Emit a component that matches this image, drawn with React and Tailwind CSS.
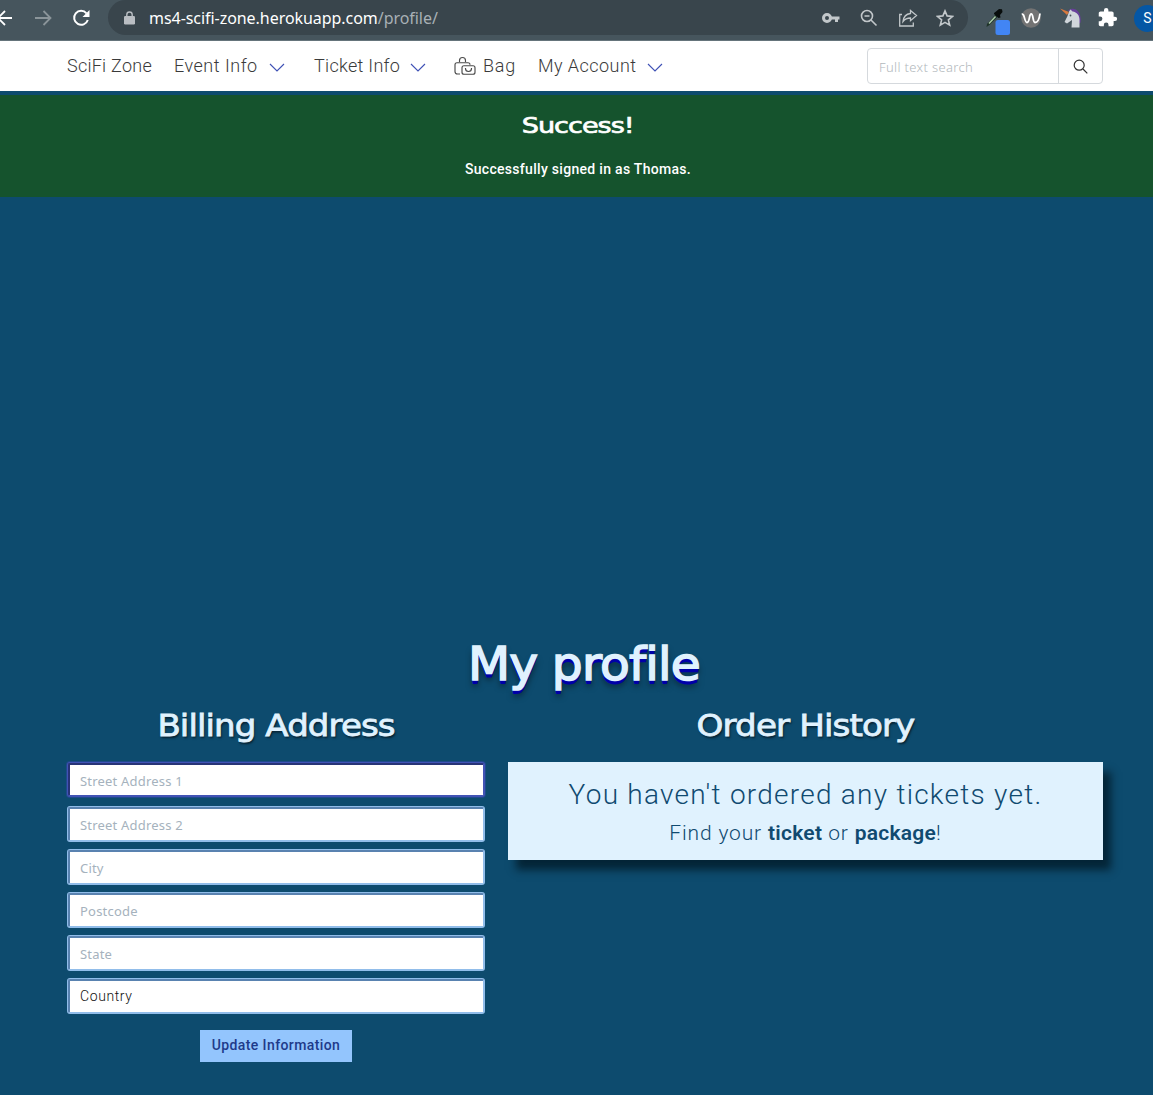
import React from "react";

const Caret = () => (
  <svg className="mt-[4px] h-[10px] w-[16px] shrink-0" viewBox="0 0 16 10" fill="none" stroke="#3f51b5" strokeWidth="1.15">
    <path d="M1 1l7 7 7-7" />
  </svg>
);

function BrowserBar() {
  return (
    <div className="flex h-[41px] items-start overflow-hidden border-b border-[#65747b] bg-[#46555d]">
      <svg className="mt-[9px] h-[18px] w-[12px] shrink-0" viewBox="0 0 12 18" fill="none" stroke="#fff" strokeWidth="1.8">
        <path d="M12 9H-2M5 2l-7 7 7 7" />
      </svg>
      <svg className="mt-[9px] ml-[22px] h-[18px] w-[18px] shrink-0" viewBox="0 0 18 18" fill="none" stroke="#8b959a" strokeWidth="1.8">
        <path d="M1 9h15M9.500 2l7 7-7 7" />
      </svg>
      <svg className="mt-[9px] ml-[20px] h-[18px] w-[18px] shrink-0" viewBox="0 0 18 18">
        <path d="M14.500 4.300A7 7 0 1 0 15.800 11" fill="none" stroke="#fff" strokeWidth="2" />
        <path d="M17.500 1v7h-7z" fill="#fff" />
      </svg>
      <div className="ml-[18px] flex h-[35px] w-[860px] shrink-0 items-center rounded-[18px] bg-[#39454c]">
        <svg className="ml-[16px] h-[14px] w-[11px] shrink-0" viewBox="0 0 11 14">
          <rect y="5" width="11" height="8.500" rx="1.200" fill="#b9bdc2" />
          <path d="M2.800 6V3.700a2.700 2.700 0 0 1 5.400 0V6" fill="none" stroke="#b9bdc2" strokeWidth="1.400" />
        </svg>
        <div className="ml-[14px] w-[660px] whitespace-nowrap font-['Noto_Sans',sans-serif] text-[16px] tracking-[-0.05px] text-white">
          ms4-scifi-zone.herokuapp.com<span className="text-[#a8b0b5]">/profile/</span>
        </div>
        <svg className="ml-[13px] h-[12px] w-[18px] shrink-0" viewBox="0 0 18 12" fill="none" stroke="#c2c7ca">
          <circle cx="5" cy="6" r="3.500" strokeWidth="3" />
          <path d="M8 6h9.500M14.500 6v4" strokeWidth="3" />
        </svg>
        <svg className="ml-[20px] h-[18px] w-[18px] shrink-0" viewBox="0 0 18 18" fill="none" stroke="#c2c7ca" strokeWidth="1.600">
          <circle cx="7" cy="7" r="5.500" />
          <path d="M11 11l5.500 5.500M4.500 7h5" />
        </svg>
        <svg className="ml-[20px] h-[18px] w-[20px] shrink-0" viewBox="0 0 20 18" fill="none" stroke="#c2c7ca" strokeWidth="1.300">
          <path d="M4 5.500H1.700v11.500h13.600v-3.500" />
          <path d="M12.500 1.500l6 5-6 5.200V9c-3.500 0-5.600 1-7.500 3.500C5.500 8 8 5 12.500 4.500z" />
        </svg>
        <svg className="ml-[18px] h-[18px] w-[18px] shrink-0" viewBox="0 0 18 18" fill="none" stroke="#c2c7ca" strokeWidth="1.600">
          <path d="M9 1.900l2.100 5 5.400.5-4.100 3.500 1.300 5.300L9 13.400l-4.700 2.800 1.300-5.300-4.100-3.500 5.400-.5z" />
        </svg>
      </div>
      <svg className="mt-[8px] ml-[18px] h-[28px] w-[24px] shrink-0" viewBox="0 0 24 28">
        <path d="M.5 19l.5-3 9-10 2.500 2-9 9z" fill="#1e3328" />
        <path d="M3 15.500l6.500-7" stroke="#a9c9a8" strokeWidth="1.600" />
        <path d="M8 5l2-1.500L13 1l3 .3.500 2.700-2.500 3 .5 2.500L12.500 10 8 6z" fill="#080d0c" />
        <rect x="9.500" y="12" width="14.500" height="15" rx="2.500" fill="#4285f4" />
      </svg>
      <svg className="mt-[8px] ml-[11px] h-[20px] w-[20px] shrink-0" viewBox="0 0 20 20">
        <circle cx="10" cy="10" r="9.800" fill="#737373" />
        <path d="M.8 6.500c2.800-2 2.500 8 5.200 8 3 0 1.800-8.500 4.200-8.500S11.500 14.500 14 14.500c2.800 0 4.500-5 5-9" fill="none" stroke="#fff" strokeWidth="1.800" />
      </svg>
      <svg className="mt-[8px] ml-[19px] h-[20px] w-[22px] shrink-0" viewBox="0 0 22 20">
        <path d="M8 2.500c7-5 14 2 12.500 12l-2.500 2-4-10z" fill="#67409a" />
        <path d="M9 3.500l1.500-2 2 2c4.500.5 7 4 7 8v8h-8l.5-7.500L7 15.500 4.500 14l3-6z" fill="#d0d6db" />
        <path d="M0 .5l9 3.500-2 3z" fill="#d9793f" />
        <circle cx="10.500" cy="7.500" r=".9" fill="#46555d" />
      </svg>
      <svg className="mt-[7px] ml-[15px] h-[21px] w-[21px] shrink-0" viewBox="0 0 24 24" fill="#fff">
        <path d="M20.500 11H19V7c0-1.100-.9-2-2-2h-4V3.500a2.500 2.500 0 0 0-5 0V5H4c-1.100 0-2 .9-2 2v3.800h1.500a2.700 2.700 0 0 1 0 5.400H2V20c0 1.100.9 2 2 2h3.800v-1.500a2.700 2.700 0 0 1 5.400 0V22H17c1.100 0 2-.9 2-2v-4h1.500a2.500 2.500 0 0 0 0-5z" />
      </svg>
      <div className="mt-[5px] ml-[16px] flex size-[27px] shrink-0 items-center justify-center rounded-full bg-[#0557a5] font-['Roboto',sans-serif] text-[14px] text-white">S</div>
    </div>
  );
}

function NavBar() {
  return (
    <nav className="flex h-[50px] items-center bg-white pl-[67px] font-['Roboto',sans-serif] text-[18px] font-light text-[#3a3a3a]">
      <div className="-mt-px flex flex-1 items-center whitespace-nowrap">
        <span className="w-[107px] tracking-[0.25px]">SciFi Zone</span>
        <span className="w-[95px] tracking-[0.5px]">Event Info</span>
        <Caret />
        <span className="ml-[29px] w-[96px] tracking-[0.3px]">Ticket Info</span>
        <Caret />
        <svg className="ml-[28px] h-[20px] w-[22px] shrink-0" viewBox="0 0 22 20" fill="none" stroke="#4a4a4a" strokeWidth="1.150">
          <path d="M5.500 6V4.500a3 3 0 0 1 6 0V6M6 18H3.500A2.500 2.500 0 0 1 1 15.500V8.700C1 7.500 1.800 6.700 3 6.700h11c1.200 0 2 .8 2 2" />
          <rect x="8" y="9.700" width="13" height="8.500" rx="2" />
          <path d="M11.500 12v.5a3 3 0 0 0 6 0V12" />
        </svg>
        <span className="ml-[7px] w-[55px] tracking-[0.8px]">Bag</span>
        <span className="w-[109px] tracking-[0.45px]">My Account</span>
        <Caret />
      </div>
      <div className="mr-[50px] flex h-[36px] w-[236px] rounded-[4px] border border-[#d5d9dd]">
        <input className="w-[191px] border-r border-[#d5d9dd] pt-[3px] pl-[11px] font-['Noto_Sans',sans-serif] text-[13px] font-light tracking-[0.35px] outline-none placeholder:text-[#b2b8bc]" placeholder="Full text search" />
        <button className="flex flex-1 items-center justify-center">
          <svg className="h-[15px] w-[15px]" viewBox="0 0 15 15" fill="none" stroke="#333" strokeWidth="1.200">
            <circle cx="6.200" cy="6.200" r="5" />
            <path d="M10 10l4.300 4.300" />
          </svg>
        </button>
      </div>
    </nav>
  );
}

const fields = ["Street Address 2", "City", "Postcode", "State"];

export default function App() {
  return (
    <div className="h-[1095px] overflow-hidden bg-[#0d4b6e]">
      <BrowserBar />
      <NavBar />
      <section className="mt-[4px] h-[102px] bg-[#15532d] text-center text-white">
        <h2 className="scale-x-[1.23] pt-[16px] pl-[2px] font-['DejaVu_Sans',sans-serif] text-[22px] leading-[30px] tracking-[-0.8px] [-webkit-text-stroke:0.7px_white]">Success!</h2>
        <p className="mt-[18px] pl-[3px] font-['Roboto',sans-serif] text-[14px] leading-[20px] font-medium tracking-[0.3px]">Successfully signed in as Thomas.</p>
      </section>
      <main className="pt-[434px]">
        <h1 className="h-[72px] scale-x-[1.06] pl-[14px] text-center font-['DejaVu_Sans',sans-serif] text-[46px] leading-[66px] tracking-[-0.8px] text-[#e0f2fe] [-webkit-text-stroke:1.5px_#e0f2fe] [text-shadow:0_1px_0_#0000a8,0_2px_0_#0000a8,0_3px_0_#0000a8,0_4px_0_#0000a8,0_6px_6px_#0008]">My profile</h1>
        <div className="flex gap-[23px] px-[67px]">
          <section className="w-[418px] shrink-0">
            <h2 className="h-[60px] scale-x-[1.135] text-center font-['DejaVu_Sans',sans-serif] text-[30px] leading-[46px] tracking-[-0.8px] text-[#e0f2fe] [-webkit-text-stroke:0.8px_#e0f2fe] [text-shadow:1px_2px_2px_#0009]">Billing Address</h2>
            <form className="px-px font-['Noto_Sans',sans-serif] text-[13px] tracking-[0.2px]">
              <input className="block h-[33px] w-full rounded-[2px] border-t-2 border-r border-b border-l-2 border-t-[#283477] border-r-[#4253b5] border-b-[#4253b5] border-l-[#283477] bg-white px-[10px] pt-px shadow-[0_0_0_1px_#4253b5,0_0_0_2px_#1f4a8c] outline-none placeholder:text-[#a5b2bd]" placeholder="Street Address 1" />
              <div className="mt-[11px] flex flex-col gap-[9px]">
                {fields.map((name) => (
                  <input key={name} className="h-[34px] w-full rounded-[2px] border-t-2 border-r border-b border-l-2 border-t-[#5982b0] border-r-[#91bdea] border-b-[#91bdea] border-l-[#5982b0] bg-white px-[10px] shadow-[0_0_0_1px_#91bdea] outline-none placeholder:text-[#a5b2bd]" placeholder={name} />
                ))}
                <div className="flex h-[34px] items-center rounded-[2px] border-t-2 border-r border-b border-l-2 border-t-[#5982b0] border-r-[#91bdea] border-b-[#91bdea] border-l-[#5982b0] bg-white px-[10px] pb-px font-['Roboto',sans-serif] text-[14px] font-light tracking-[0.6px] text-[#101010] shadow-[0_0_0_1px_#91bdea]">Country</div>
              </div>
              <button type="button" className="mx-auto mt-[17px] block h-[32px] w-[152px] bg-[#93c5fd] pb-[2px] font-['Roboto',sans-serif] text-[14px] font-medium tracking-[0.4px] text-[#1e3a8a]">Update Information</button>
            </form>
          </section>
          <section className="w-[595px] shrink-0">
            <h2 className="h-[59px] scale-x-[1.14] text-center font-['DejaVu_Sans',sans-serif] text-[30px] leading-[46px] tracking-[-0.8px] text-[#e0f2fe] [-webkit-text-stroke:0.8px_#e0f2fe] [text-shadow:1px_2px_2px_#0009]">Order History</h2>
            <div className="h-[98px] bg-[#e0f2fe] pt-[12px] text-center font-['Roboto',sans-serif] font-light text-[#104a70] shadow-[8px_10px_8px_#001621b8]">
              <p className="text-[28px] leading-[42px] tracking-[1.25px]">You haven't ordered any tickets yet.</p>
              <p className="text-[21px] leading-[35px] tracking-[0.85px]">Find your <b className="font-semibold tracking-[0.25px]">ticket</b> or <b className="font-semibold tracking-[0.25px]">package</b>!</p>
            </div>
          </section>
        </div>
      </main>
    </div>
  );
}
